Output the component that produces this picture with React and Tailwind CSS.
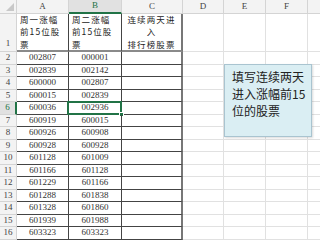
import React from "react";

const week1 = ["002807", "002839", "600000", "600015", "600036", "600919", "600926", "600928", "601128", "601166", "601229", "601288", "601328", "601939", "603323"];
const week2 = ["000001", "002142", "002807", "002839", "002936", "600015", "600908", "600928", "601009", "601128", "601166", "601838", "601860", "601988", "603323"];

const cols = [
  { key: "A", w: "w-[52px]" },
  { key: "B", w: "w-[53px]" },
  { key: "C", w: "w-[61px]" },
  { key: "D", w: "w-[41px]" },
  { key: "E", w: "w-[42px]" },
  { key: "F", w: "w-[42px]" },
];

const cjk = { fontFamily: '"Noto Sans CJK SC", sans-serif' };
const num = { fontFamily: '"Liberation Serif", serif' };

const HeadCell = ({ w, center, lines, right = "border-r border-r-[#444]" }) => (
  <div
    style={cjk}
    className={`${w} shrink-0 ${right} border-b-2 border-b-[#8a8a8a] px-[3px] flex flex-col justify-end text-[8.5px] leading-[12.4px] tracking-[1.1px] text-[#222] ${
      center ? "items-center" : "items-start"
    }`}
  >
    {lines.map((l) => (
      <span key={l} className="whitespace-nowrap">
        {l}
      </span>
    ))}
  </div>
);

const App = () => {
  return (
    <div className="relative w-[320px] h-[242px] overflow-hidden bg-white text-[#333]">
      {/* column headers */}
      <div className="flex h-[14px] bg-[#f3f3f3]">
        <div className="relative w-[17px] shrink-0 border-r border-b border-[#d4d4d4]">
          <div className="absolute right-[2px] bottom-[2px] w-0 h-0 border-l-[8px] border-l-transparent border-b-[8px] border-b-[#c8c8c8]" />
        </div>
        {cols.map((c) => (
          <div
            key={c.key}
            style={num}
            className={`${c.w} shrink-0 flex items-center justify-center text-[9px] border-r border-[#d4d4d4] ${
              c.key === "B"
                ? "bg-[#e1e1e1] border-b-2 border-b-[#217346] text-[#217346]"
                : "border-b border-b-[#d4d4d4] text-[#444]"
            }`}
          >
            {c.key}
          </div>
        ))}
        <div className="flex-1 border-b border-[#d4d4d4]" />
      </div>

      {/* row 1 */}
      <div className="flex h-[38px]">
        <div style={num} className="w-[17px] shrink-0 bg-[#f3f3f3] border-r border-b border-[#d4d4d4] flex items-end justify-center pb-[1px] text-[9px] text-[#444]">
          1
        </div>
        <HeadCell w="w-[52px]" lines={["周一涨幅", "前15位股", "票"]} />
        <HeadCell w="w-[53px]" lines={["周二涨幅", "前15位股", "票"]} />
        <HeadCell w="w-[61px]" center right="border-r-2 border-r-[#777]" lines={["连续两天进", "入", "排行榜股票"]} />
        <div className="w-[41px] shrink-0 border-r border-b border-[#e1e1e1]" />
        <div className="w-[42px] shrink-0 border-r border-b border-[#e1e1e1]" />
        <div className="w-[42px] shrink-0 border-r border-b border-[#e1e1e1]" />
        <div className="flex-1 border-b border-[#e1e1e1]" />
      </div>

      {/* data rows */}
      {week1.map((a, i) => {
        const n = i + 2;
        const active = n === 6;
        return (
          <div key={n} className="flex h-[12.5px]">
            <div
              style={num}
              className={`w-[17px] shrink-0 border-b border-[#d4d4d4] flex items-center justify-center text-[9px] ${
                active ? "bg-[#e1e1e1] text-[#217346] border-r-2 border-r-[#217346]" : "bg-[#f3f3f3] text-[#444] border-r border-r-[#d4d4d4]"
              }`}
            >
              {n}
            </div>
            <div style={num} className="w-[52px] shrink-0 border-r border-b border-[#444] flex items-center justify-center text-[9px]">
              {a}
            </div>
            <div
              style={num}
              className="relative w-[53px] shrink-0 border-r border-b border-[#444] flex items-center justify-center text-[9px]"
            >
              {week2[i]}
              {active && (
                <>
                  <div className="absolute -left-[2px] -top-[1px] -right-[1px] -bottom-[1px] border-2 border-[#217346]" />
                  <div className="absolute -right-[3px] -bottom-[3px] w-[5px] h-[5px] bg-[#217346] border border-white" />
                </>
              )}
            </div>
            <div className="w-[61px] shrink-0 border-r-2 border-r-[#777] border-b border-b-[#444]" />
            <div className="w-[41px] shrink-0 border-r border-b border-[#e1e1e1]" />
            <div className="w-[42px] shrink-0 border-r border-b border-[#e1e1e1]" />
            <div className="w-[42px] shrink-0 border-r border-b border-[#e1e1e1]" />
            <div className="flex-1 border-b border-[#e1e1e1]" />
          </div>
        );
      })}

      {/* text box */}
      <div
        style={cjk}
        className="absolute left-[224px] top-[64px] w-[88px] h-[73px] bg-[#daeef3] border border-[#a9c4d0] shadow-[1px_1px_2px_rgba(0,0,0,0.15)] pl-[7px] pr-[3px] pt-[3px] text-[12px] leading-[17px] text-[#222]"
      >
        填写连续两天进入涨幅前15位的股票
      </div>
    </div>
  );
};

export default App;
